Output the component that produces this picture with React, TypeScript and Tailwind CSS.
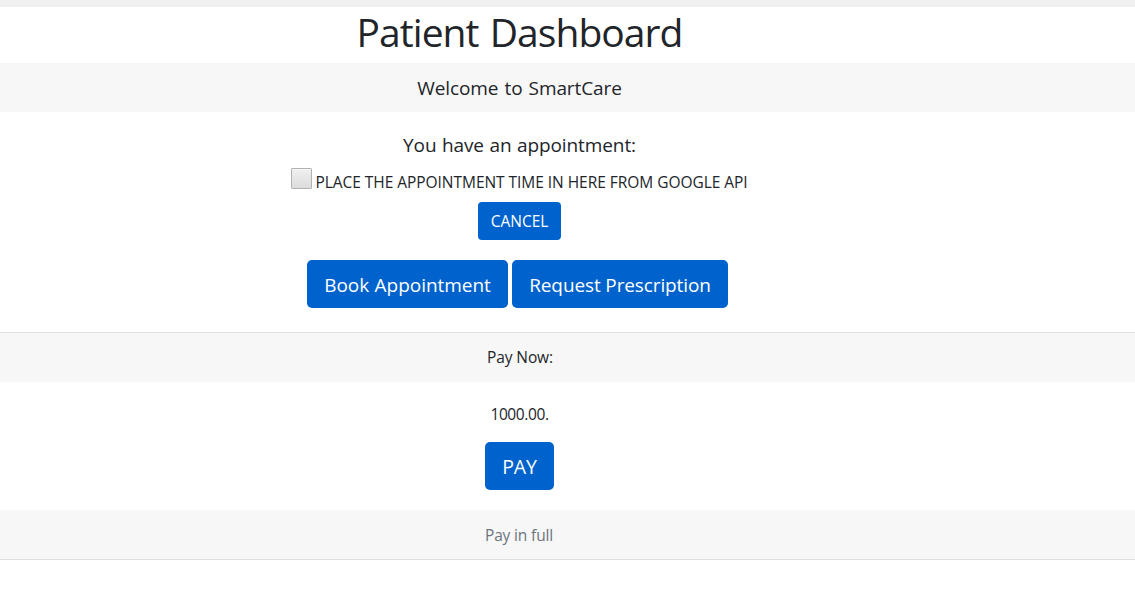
import type { ReactNode } from "react";

function Label({ className, children }: { className: string; children: ReactNode }) {
  return <span className={`inline-block whitespace-nowrap ${className}`}>{children}</span>;
}

function Button({ className, children }: { className: string; children: ReactNode }) {
  return (
    <button className={`flex items-center justify-center whitespace-nowrap bg-[#0062cc] text-white ${className}`}>
      {children}
    </button>
  );
}

export default function App() {
  return (
    <div className="h-[616px] w-[1135px] overflow-hidden bg-white font-['Segoe_UI','Open_Sans',sans-serif] text-[#212529]">
      <div className="h-[7px] bg-[#f0f0f0]" />
      <h1 className="flex h-14 items-center justify-center pr-24 pb-1.5 text-[39px] leading-[48px]">
        <Label className="tracking-[-0.95px] [word-spacing:2px]">Patient Dashboard</Label>
      </h1>
      <section>
        <header className="flex h-[49px] items-center justify-center bg-[#f7f7f7] pr-24 text-[19px] leading-6">
          <Label className="tracking-[-0.1px] [word-spacing:1.3px]">Welcome to SmartCare</Label>
        </header>
        <div className="flex h-[220px] flex-col items-center pt-[21px] pr-24">
          <h5 className="text-[19px] leading-6">
            <Label className="tracking-[-0.1px] [word-spacing:0.7px]">You have an appointment:</Label>
          </h5>
          <div className="mt-[11px] flex h-[22px] items-start gap-[3px]">
            <span className="h-[21px] w-[21px] rounded-[1px] border border-[#b2b2b2] bg-linear-to-b from-[#f0f0f0] to-[#dcdcdc] shadow-[inset_0_1px_0_#f8f8f8]" />
            <p className="pt-[2px] text-[15.5px] leading-6">
              <Label className="tracking-[-0.04px]">PLACE THE APPOINTMENT TIME IN HERE FROM GOOGLE API</Label>
            </p>
          </div>
          <Button className="mt-3 h-[38px] w-[83px] rounded-[4px] pt-px text-[15.5px]">
            <Label className="">CANCEL</Label>
          </Button>
          <div className="mt-5 flex gap-1 pr-[4px]">
            <Button className="h-12 w-[201px] rounded-[5px] pt-0.5 text-[19px]">
              <Label className="tracking-[-0.03px] [word-spacing:0.5px]">Book Appointment</Label>
            </Button>
            <Button className="h-12 w-[216px] rounded-[5px] pt-0.5 text-[19px]">
              <Label className="tracking-[-0.12px]">Request Prescription</Label>
            </Button>
          </div>
        </div>
      </section>
      <section className="border-y border-[#dfdfdf] text-[15.5px]">
        <header className="flex h-[49px] items-center justify-center bg-[#f7f7f7] pr-[95px]">
          <Label className="tracking-[-0.1px]">Pay Now:</Label>
        </header>
        <div className="flex h-32 flex-col items-center pt-5 pr-24">
          <p className="leading-6">
            <Label className="tracking-[-0.4px]">1000.00.</Label>
          </p>
          <Button className="mt-4 h-12 w-[69px] rounded-[5px] pt-px text-[19.5px]">
            <Label className="tracking-[-0.1px]">PAY</Label>
          </Button>
        </div>
        <footer className="flex h-[49px] items-center justify-center bg-[#f7f7f7] pt-0.5 pr-[97px] text-[#6c757d]">
          <Label className="tracking-[-0.15px]">Pay in full</Label>
        </footer>
      </section>
    </div>
  );
}
